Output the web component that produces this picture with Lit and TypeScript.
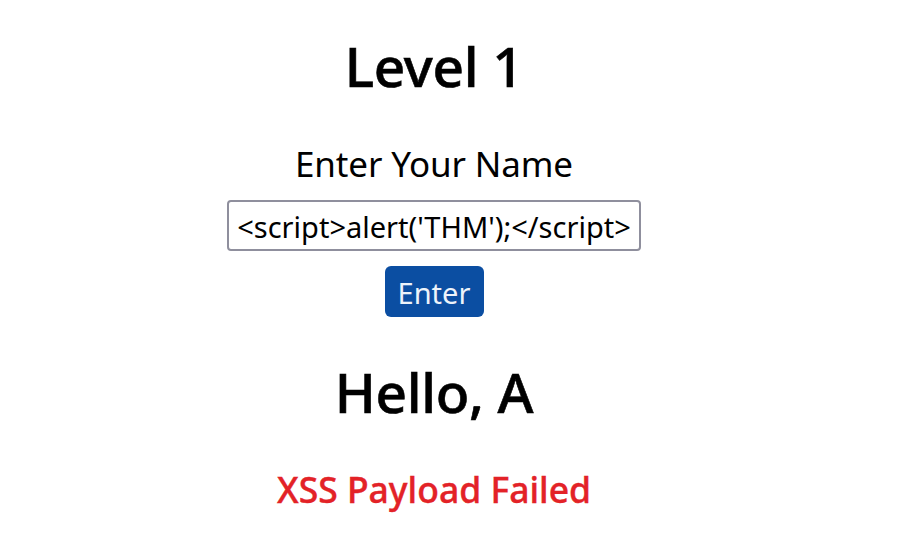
import { LitElement, html, css } from "lit";
import { customElement, property } from "lit/decorators.js";

@customElement("app-root")
class AppRoot extends LitElement {
  @property() value = "<script>alert('THM');</script>";

  static styles = css`
    :host { display: block; height: 560px; overflow: hidden; background: #fff; color: #000; font-family: "Noto Sans", sans-serif; }
    main { width: 868px; display: flex; flex-direction: column; align-items: center; padding-top: 29px; }
    h1, h2, p { margin: 0; white-space: nowrap; }
    h1, h2 { font-size: 55px; line-height: 74px; height: 74px; font-weight: 500; letter-spacing: -0.35px; -webkit-text-stroke: 0.6px currentColor; }
    .label { margin-top: 37px; font-size: 35px; line-height: 48px; height: 48px; letter-spacing: -0.15px; }
    form { display: flex; flex-direction: column; align-items: center; }
    .field { box-sizing: border-box; width: 414px; height: 51px; margin-top: 12px; padding-top: 2px; border: 2px solid #8f8f9d; border-radius: 4px; display: flex; justify-content: center; align-items: center; font-size: 29px; line-height: 38px; white-space: nowrap; }
    button { box-sizing: border-box; width: 99px; height: 51px; margin-top: 15px; padding: 2px 0 0; border: 0; border-radius: 6px; background: #0b4ea2; color: #edf3fa; font: 29px/38px "Noto Sans", sans-serif; }
    h2 { margin-top: 38px; }
    .error { margin-top: 36px; color: #e32227; font-size: 35.5px; line-height: 48px; font-weight: 500; -webkit-text-stroke: 0.4px currentColor; }
  `;

  render() {
    return html`<main>
      <h1>Level 1</h1>
      <p class="label">Enter Your Name</p>
      <form>
        <div class="field">${this.value}</div>
        <button type="button">Enter</button>
      </form>
      <h2>Hello, A</h2>
      <p class="error">XSS Payload Failed</p>
    </main>`;
  }
}
